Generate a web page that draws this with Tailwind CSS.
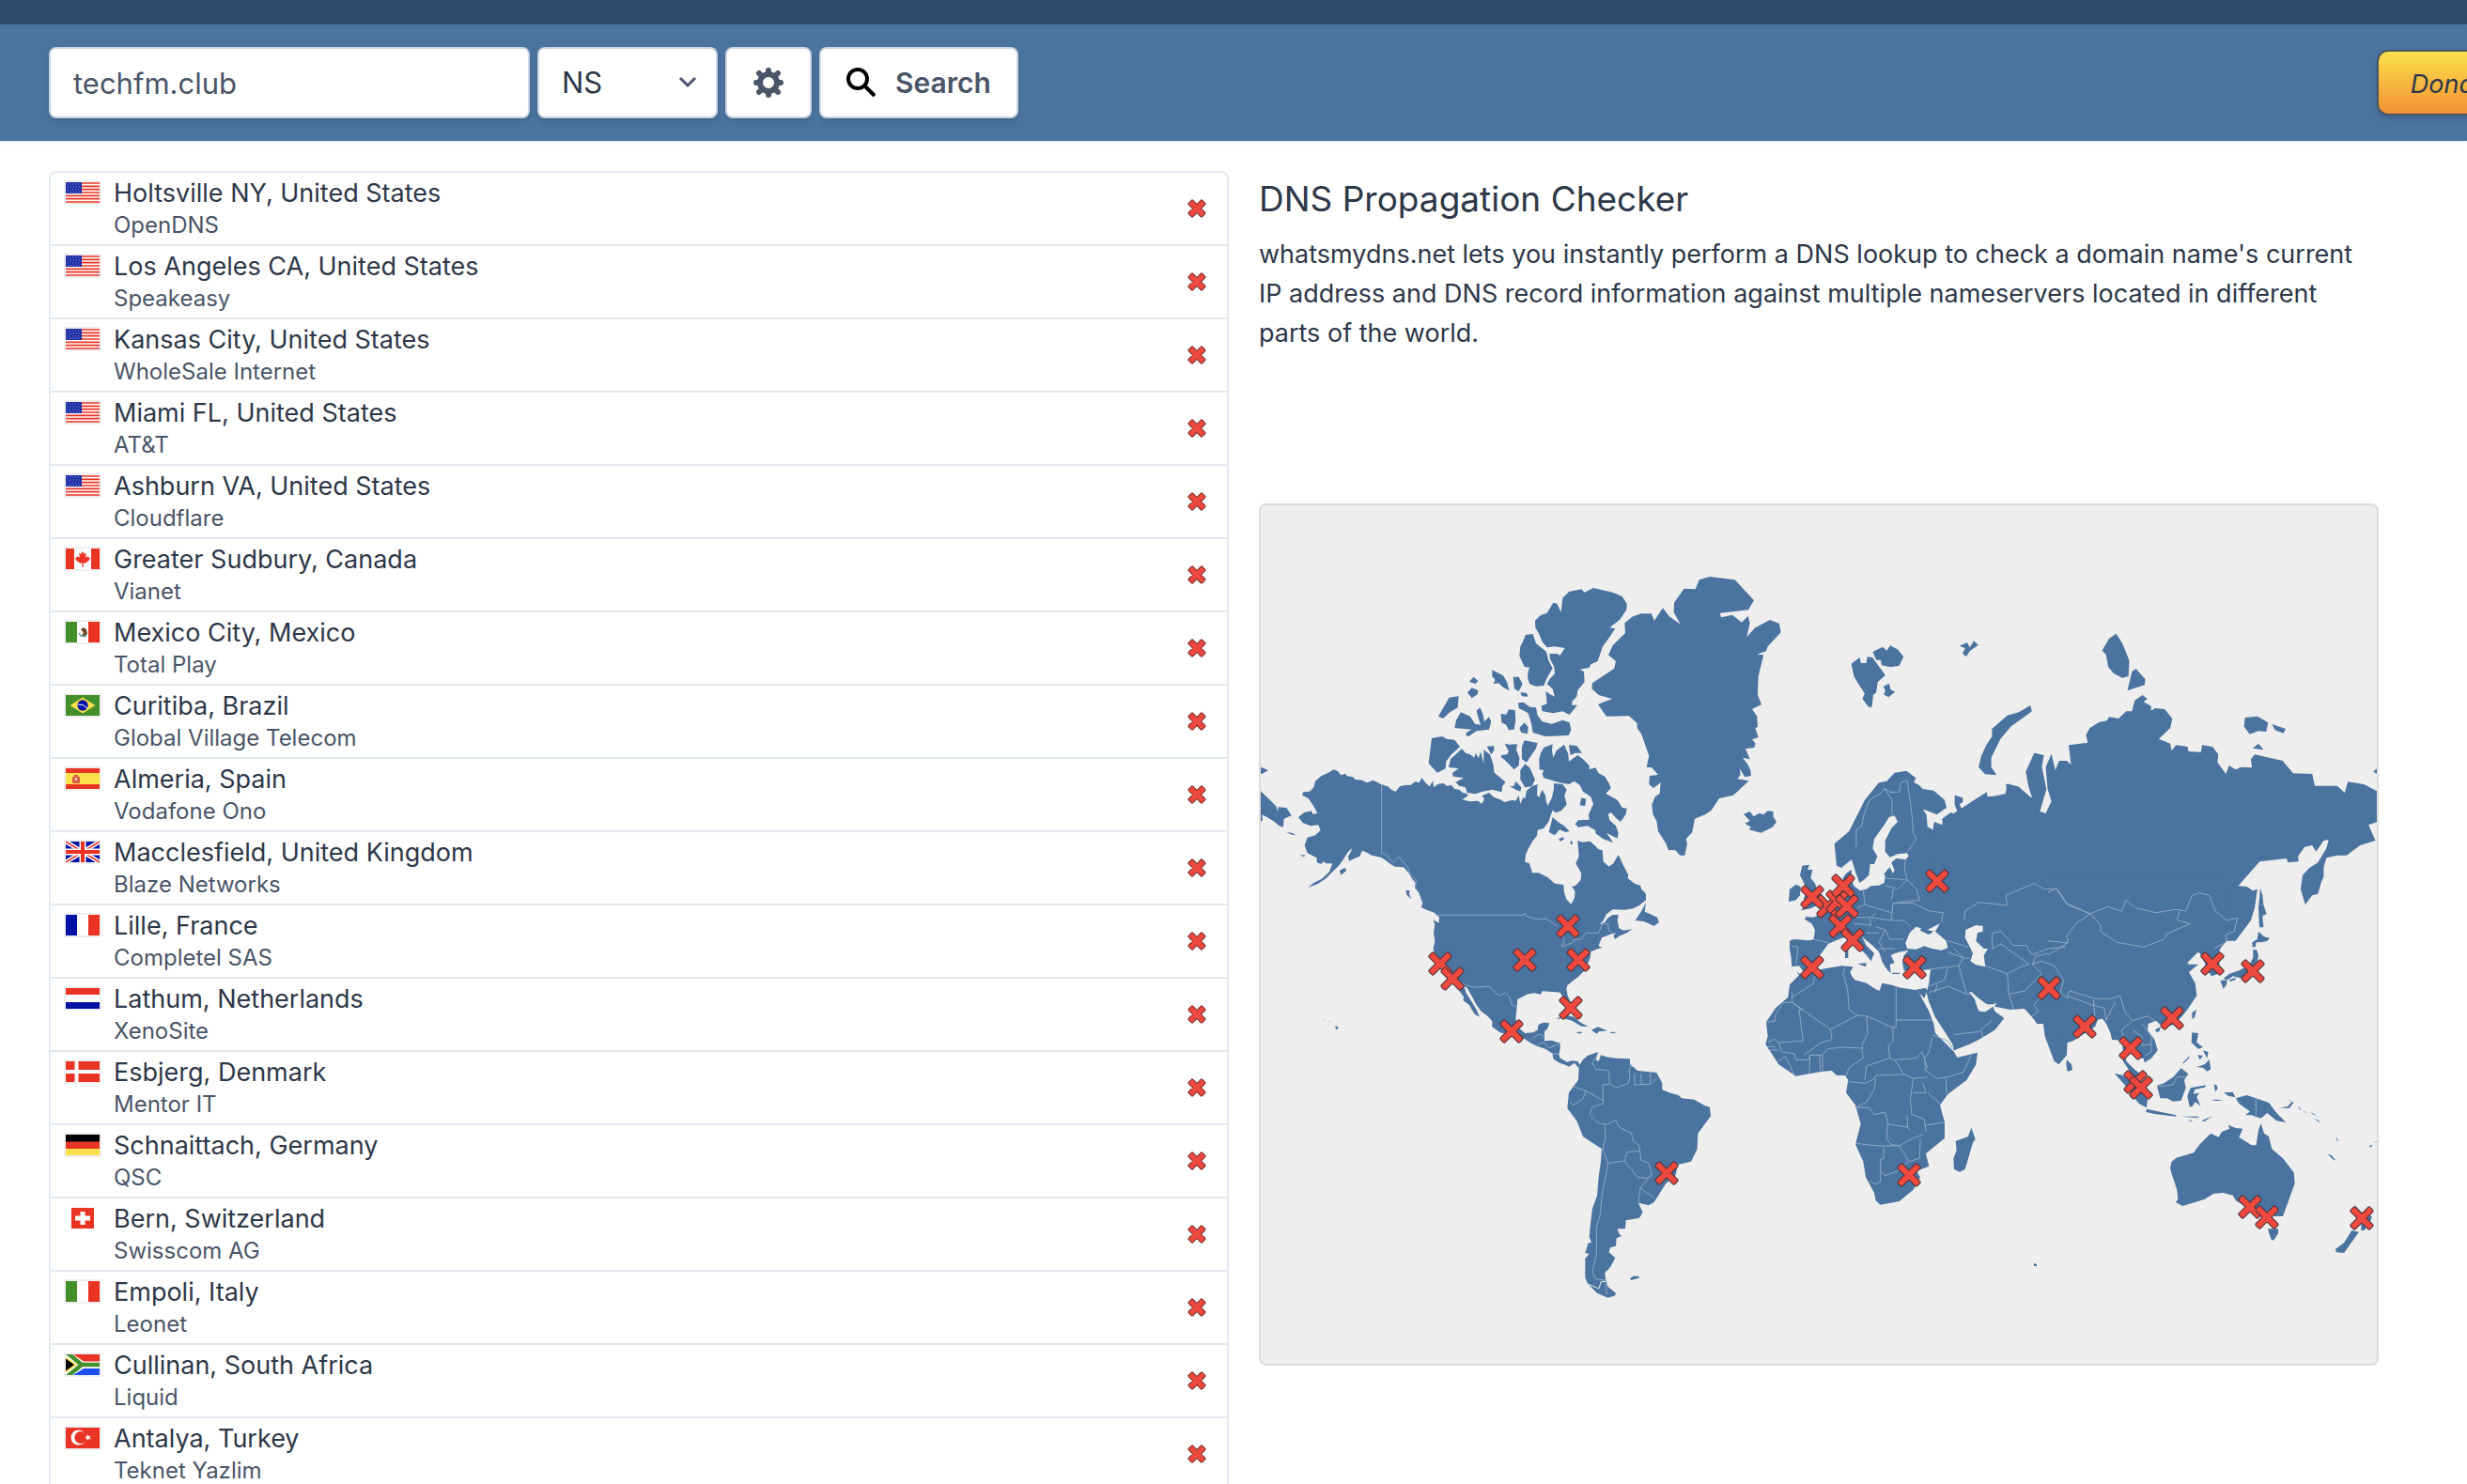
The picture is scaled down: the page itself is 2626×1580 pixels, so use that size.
<!DOCTYPE html>
<html lang="en">
<head>
    <meta charset="UTF-8">
    <meta name="viewport" content="width=device-width, initial-scale=1.0">
    <title>DNS Propagation Checker</title>
    <script src="https://cdn.jsdelivr.net/npm/@tailwindcss/browser@4"></script>
</head>
<body class="overflow-x-hidden bg-white font-['Inter','Liberation_Sans',sans-serif] text-[#2d3748]">
    <!-- Header -->
    <div class="h-[26px] bg-[#2e4a6d]"></div>
    <header class="relative flex items-center overflow-hidden bg-[#4a739f] py-6 pl-[52px] shadow">
        <form class="flex flex-1 gap-2" onsubmit="return false">
            <input type="text" aria-label="Domain" value="techfm.club" class="h-[76px] w-[512px] rounded-lg border-2 border-[#cbd5e0] bg-white px-6 text-[31px] text-[#4a5568] shadow-md">
            <div class="relative">
                <select aria-label="Record type" class="h-[76px] w-[192px] appearance-none rounded-lg border-2 border-[#cbd5e0] bg-white px-6 text-[31px] text-[#2d3748] shadow-md">
                    <option>NS</option>
                    <option>A</option>
                    <option>MX</option>
                </select>
                <svg class="pointer-events-none absolute top-6 right-5 size-6" viewBox="0 0 24 24" fill="none" stroke="#4a5568" stroke-width="3"><path d="M4 9l8 8 8-8"/></svg>
            </div>
            <button type="button" aria-label="Options" class="flex h-[76px] w-[92px] items-center justify-center rounded-lg border-2 border-[#cbd5e0] bg-white text-[#4a5568] shadow-md">
                <svg class="size-8" viewBox="-16 -16 32 32" fill="none" stroke="currentColor"><circle r="9" stroke-width="6"/><path stroke-width="6" stroke-linecap="round" d="M0-10.500V-13M0 10.500V13M-10.500 0H-13M10.500 0H13M-8.500-8.500L-10-10M8.500-8.500L10-10M-8.500 8.500L-10 10M8.500 8.500L10 10"/></svg>
            </button>
            <button type="submit" class="flex h-[76px] w-[212px] items-center justify-center gap-5 rounded-lg border-2 border-[#cbd5e0] bg-white text-[30px] font-semibold text-[#4a5568] shadow-md">
                <svg class="size-8" viewBox="0 0 32 32" fill="none" stroke="#000" stroke-width="4"><circle cx="12" cy="12" r="10"/><path d="M19 19l11 11"/></svg>
                Search
            </button>
        </form>
        <button type="button" class="-mr-16 h-[70px] w-40 shrink-0 rounded-xl border-2 border-[#4a5568] bg-gradient-to-b from-[#fae14b] to-[#f09035] pt-1 pl-1 text-[27px] text-[#2d3748] italic shadow-md">Donate</button>
    </header>

    <!-- Main Content -->
    <main class="grid grid-cols-2 items-start pt-8 pr-[62px] pl-[52px]">
        <ul id="servers" class="divide-y-2 divide-[#e2e8f0] rounded-lg border-2 border-[#e2e8f0]"></ul>

        <section class="px-8 pt-1">
            <h1 class="text-[37px] leading-[52px]">DNS Propagation Checker</h1>
            <p class="mt-3 text-[27px] leading-[42px]">whatsmydns.net lets you instantly perform a DNS lookup to check a domain name's current IP address and DNS record information against multiple nameservers located in different parts of the world.</p>

            <div class="mt-[160px] overflow-hidden rounded-lg border-2 border-[#dcdcdc] bg-[#eeeeee]">
                <svg class="block w-full" viewBox="0 0 1188 914">
                    <!-- Land -->
                    <g fill="#4a739f">
                        <g transform="translate(-2 242) scale(.33333)">
                            <path d="M238 118L252 123 262 136 277 131 280 138 300 142 308 150 330 152 345 160 365 152 392 166 412 172 425 184 437 188 450 172 470 167 484 168 500 156 512 160 520 144 532 160 545 172 556 154 558 175 572 164 590 162 600 170 615 168 625 180 640 182 650 192 665 195 668 202 650 214 672 220 700 218 712 228 720 212 712 202 735 192 750 206 770 214 785 222 810 215 820 218 830 200 835 228 845 205 850 212 855 185 865 178 875 170 890 165 888 200 895 206 905 182 915 200 918 222 923 235 930 222 938 248 925 285 910 305 890 312 888 330 875 345 860 372 852 390 850 413 864 418 873 448 893 448 922 462 945 482 973 486 975 510 982 532 997 548 1008 528 1010 508 1000 492 1012 488 1028 470 1030 450 1012 418 1022 395 1018 345 1035 350 1057 347 1075 362 1083 372 1097 376 1100 412 1118 428 1132 418 1148 390 1162 420 1180 455 1178 465 1200 482 1218 488 1222 500 1236 515 1236 535 1215 552 1195 562 1168 566 1130 565 1110 580 1100 600 1087 614 1105 605 1115 592 1130 582 1148 582 1145 600 1150 625 1165 632 1192 628 1175 640 1150 650 1138 660 1132 650 1140 640 1120 645 1095 655 1088 672 1085 682 1096 686 1078 692 1060 700 1058 720 1040 760 1020 780 1000 795 985 808 982 820 986 840 996 862 998 880 985 870 975 850 962 830 940 828 905 826 900 836 880 832 860 835 826 852 824 875 820 915 832 945 850 960 875 958 890 950 893 932 910 926 928 928 922 945 912 955 912 985 935 983 962 992 962 1010 958 1028 962 1040 985 1052 1000 1048 1018 1050 1025 1060 1020 1070 1008 1055 990 1067 975 1060 960 1055 940 1042 938 1025 915 1010 890 1002 870 992 848 978 810 968 770 958 745 940 745 922 730 905 710 890 695 870 682 845 665 815 655 810 662 832 680 860 695 885 705 908 690 900 680 885 672 870 652 855 655 845 640 825 620 800 590 770 570 730 560 705 557 690 562 665 558 640 562 615 557 598 575 608 576 590 560 575 540 568 518 558 523 545 518 530 510 510 498 495 500 480 490 468 478 448 462 430 435 428 420 420 405 408 390 398 360 392 345 383 330 377 322 395 305 402 288 410 285 395 295 378 297 370 285 380 270 405 255 425 235 445 215 465 190 482 157 495 175 480 200 468 225 445 235 418 215 418 205 412 200 420 185 415 185 400 155 385 146 360 155 335 180 328 197 312 190 295 165 298 140 288 126 270 145 255 168 250 172 260 187 258 175 235 158 210 138 200 142 190 162 188 175 175 180 155 200 138 222 128Z"/>
                            <path d="M6 187L55 235 60 252 62 238 88 240 104 265 80 275 78 302 65 298 50 285 30 272 10 262 12 280 6 285ZM6 110L30 120 10 132 6 130ZM88 318L105 320 118 328 105 326ZM132 390L150 392 142 397ZM258 440L275 432 280 440 262 455ZM470 503L482 505 480 515 487 532 472 518ZM243 938L251 938 254 944 247 949ZM225 922l5 2-4 1zM207 915l4 2-3 1z"/>
                            <path d="M1236 543L1222 570 1202 600 1230 603 1262 618 1278 605 1272 590 1250 580 1232 572ZM950 915L975 900 1005 908 1030 928 1052 938 1030 938 1000 920 970 912ZM1062 950L1082 940 1112 952 1085 955 1080 962ZM1015 956h16v5h-14zM1123 956h15v4h-15z"/>
                        </g>
                        <g transform="translate(158 62) scale(.33333)">
                            <path d="M72 558L105 552 120 560 145 563 162 585 135 610 118 632 116 655 90 668 62 638ZM168 592L180 605 195 610 208 620 212 605 222 622 228 600 238 640 238 595 258 610 268 640 272 668 308 698 298 710 295 730 265 722 235 728 210 736 185 732 180 715 160 710 148 698 175 685 140 680 138 668 158 655 126 650 132 625ZM248 585L270 582 272 595 262 610ZM305 575L320 578 345 577 342 595 352 620 350 645 335 658 318 640 294 618 294 612 312 610 318 600ZM368 565L410 573 405 590 375 635 360 625 360 585ZM370 640L385 652 402 690 392 712 370 715 355 690 355 660ZM322 712L335 710 340 695 358 715 355 728 340 722Z"/>
                            <path d="M420 605L430 588 458 577 456 598 460 620 470 598 495 578 508 608 510 632 538 612 555 625 575 645 575 658 595 652 605 670 625 680 640 705 644 718 628 735 665 755 680 780 695 782 692 800 675 825 660 812 645 795 635 800 640 820 660 838 668 860 665 878 630 860 652 892 620 880 595 862 595 852 570 838 540 842 530 832 540 820 575 818 573 802 588 768 580 745 555 728 545 708 528 695 510 705 480 700 430 685 425 672 430 660 416 658 415 625ZM510 580L535 582 552 605 530 605 515 612ZM462 702L490 705 503 722 496 740 503 770 485 790 468 796 442 775 455 750 462 720ZM458 810L475 825 495 838 512 855 500 858 480 850 465 868 446 858ZM478 880l12-6 6 6-14 8zM514 888l6-2 2 10-6 2zM550 748L565 752 562 775 545 772Z"/>
                            <path d="M348 445L365 443 385 458 405 460 410 485 425 505 455 512 490 500 512 508 517 530 510 548 490 550 435 552 395 540 390 510 380 478 350 462ZM490 110L510 90 550 82 560 92 588 78 650 92 680 105 695 128 694 148 672 180 640 205 658 208 635 242 618 265 602 312 580 322 575 332 545 338 558 345 560 378 538 405 535 425 520 440 520 452 537 452 512 483 490 472 460 478 425 472 422 455 440 448 436 408 450 418 465 425 458 400 440 385 448 370 465 352 463 330 450 305 448 288 470 288 482 293 497 270 465 265 440 268 425 250 415 225 403 205 402 182 420 165 440 158 460 125 472 128 485 155ZM372 228L395 225 405 255 438 282 445 310 458 335 440 365 430 390 405 392 385 385 378 365 380 345 385 332 368 330 352 295 355 265 365 245Z"/>
                            <path d="M265 340L300 358 312 378 320 406 300 395 285 382 268 385 275 372 265 360ZM332 362L350 362 362 385 350 408 336 400ZM355 412L375 413 380 425 360 424ZM192 378L205 362 220 374 212 384ZM186 412L200 397 220 405 218 418 200 430ZM93 488L128 428 158 424 155 460 130 475 108 495ZM165 475L195 488 210 512 228 515 220 490 215 470 226 460 235 480 240 505 255 490 262 505 255 530 215 535 190 552 182 550 182 540 200 530 145 525 150 500ZM293 480L310 482 318 466 338 468 340 500 335 530 318 532 310 515 295 508ZM352 525L368 508 380 522 378 544 358 540Z"/>
                            <path d="M585 382L655 335 660 312 636 292 650 262 690 222 688 190 712 170 740 160 773 160 783 182 810 142 830 168 866 194 845 155 846 125 878 80 914 82 926 52 960 42 1040 52 1101 118 1083 148 992 158 996 172 1032 164 1062 188 1082 168 1088 190 1078 235 1105 205 1152 180 1182 192 1187 220 1145 265 1140 280 1110 290 1132 292 1115 360 1113 420 1125 450 1095 465 1111 488 1113 522 1105 525 1115 555 1095 562 1106 575 1102 588 1074 592 1088 625 1065 620 1080 640 1090 660 1092 678 1072 682 1055 655 1058 675 1048 688 1085 694 1035 740 990 750 965 788 945 802 912 815 904 858 884 880 888 895 880 932 865 932 850 916 828 915 820 895 795 855 790 822 778 800 775 770 785 745 800 735 803 700 780 717 766 705 768 678 795 675 775 652 758 650 766 615 742 545 728 525 728 510 702 487 630 488 603 450 648 432 605 420 583 400Z"/>
                            <path d="M1068 800L1088 792 1100 808 1118 797 1132 802 1145 790 1163 792 1162 808 1173 825 1160 842 1123 860 1085 850 1092 842 1072 830 1088 822Z"/>
                        </g>
                        <g transform="translate(298 522) scale(.33333)">
                            <path d="M183 180L176 205 185 210 192 190 210 196 240 200 285 202 285 220 310 240 370 246 388 280 388 300 410 310 440 318 450 328 490 332 525 352 540 356 543 385 502 440 500 490 480 530 438 540 430 575 400 600 362 660 345 670 312 662 326 692 315 710 272 718 270 745 245 745 250 760 258 768 242 775 240 800 222 805 218 820 238 838 222 868 205 885 208 912 215 930 240 950 238 958 215 965 180 950 150 920 142 900 142 840 155 825 142 822 152 790 162 790 155 770 160 720 165 680 180 640 185 580 192 530 195 490 135 450 115 400 85 360 90 310 120 270 122 225 135 205 150 192ZM284 905L295 896 315 896 312 903 290 908Z"/>
                        </g>
                        <g transform="translate(498 242) scale(.33333)">
                            <path d="M218 765L228 770 262 762 300 755 360 745 398 748 388 765 395 780 402 790 440 800 470 820 482 825 490 800 515 805 550 815 595 822 630 815 634 825 625 848 608 832 640 890 655 930 660 960 700 1000 720 1020 730 1038 795 1022 790 1060 760 1110 700 1155 675 1190 690 1245 690 1295 630 1345 640 1385 600 1400 612 1420 590 1460 545 1497 485 1508 470 1495 465 1470 438 1420 430 1370 405 1315 422 1250 405 1190 375 1150 382 1110 372 1095 345 1095 330 1080 300 1082 215 1097 160 1060 118 995 125 970 120 925 150 880 190 845 195 805 225 775Z"/>
                            <path d="M195 665L208 660 260 664 272 660 276 630 265 610 243 596 248 588 270 590 290 582 320 560 345 535 360 515 370 500 365 465 375 450 393 437 392 465 400 490 420 505 440 500 455 490 480 488 497 480 500 460 497 450 515 430 525 450 530 440 520 415 535 402 565 405 575 395 570 385 540 388 515 398 500 380 500 345 520 305 540 285 530 265 512 270 500 290 465 340 460 370 475 395 465 420 452 420 448 455 432 470 418 480 405 445 393 405 360 432 345 425 338 355 385 315 435 215 480 160 505 155 530 128 568 122 598 145 592 160 605 165 620 180 655 185 690 215 696 240 665 262 635 250 620 245 632 262 635 300 655 312 655 290 685 298 682 275 710 255 725 262 730 250 722 230 722 200 748 208 748 222 738 228 742 240 762 242 770 225 825 190 825 205 885 200 890 185 885 165 925 172 968 210 972 180 1000 300 1500 300 1500 700 1350 850 1260 985 1225 980 1215 940 1190 910 1180 915 1170 940 1100 985 1082 990 1080 1030 1055 1060 1040 1050 1010 970 1005 930 985 930 970 910 945 882 900 885 850 875 855 862 845 868 825 868 800 850 775 828 768 830 785 850 795 880 800 890 820 892 845 875 850 890 880 912 850 950 800 980 770 995 720 1015 715 995 690 955 660 910 640 860 632 830 640 800 645 755 615 760 590 765 560 760 555 735 560 712 575 695 550 700 530 705 518 712 530 735 515 740 518 768 505 755 492 735 480 700 460 680 435 660 425 650 440 680 465 705 455 730 440 710 420 690 395 660 365 655 340 665 318 675 300 700 285 720 290 730 270 755 238 762 225 745 202 748 200 720 195 690Z"/>
                            <path d="M235 425L258 422 252 438 268 438 262 465 275 480 285 505 300 520 290 550 260 562 230 568 250 548 240 530 250 505 238 475 228 455ZM195 500L215 485 230 492 228 520 215 535 192 540ZM412 738L440 736 438 748ZM372 692h10v28h-10zM374 672l8 8-4 8zM522 767h24v4h-24zM775 1262L788 1298 780 1310 755 1395 738 1403 720 1395 718 1360 728 1335 725 1305 765 1290ZM1080 1045L1095 1060 1098 1078 1082 1082 1078 1060Z"/>
                        </g>
                        <g transform="translate(558 102) scale(.40816 .33333)">
                            <path d="M385 735L390 705 410 715 412 695 440 678 475 650 525 612 530 628 575 615 580 583 600 590 645 630 635 590 628 545 650 485 675 492 670 530 682 600 665 672 680 678 695 640 685 600 680 530 695 488 705 540 715 510 735 510 746 522 740 460 790 452 785 428 795 405 820 386 840 382 845 370 870 375 890 352 905 352 912 318 932 300 945 312 935 322 955 335 955 350 965 342 990 345 1010 375 1005 405 975 440 1005 455 1008 478 1020 460 1050 465 1052 480 1085 482 1088 460 1115 465 1130 490 1128 515 1150 552 1158 525 1175 538 1190 530 1218 532 1215 505 1225 490 1298 510 1325 550 1375 552 1382 590 1440 590 1460 612 1468 577 1510 585 1545 608V705L1522 715 1540 765 1500 780 1465 812 1440 812 1412 820 1405 850 1405 880 1398 900 1390 935 1375 940 1357 970 1345 920 1350 875 1368 852 1390 835 1412 790 1418 762 1405 765 1385 800 1375 780 1355 785 1338 815 1340 832 1312 835 1308 822 1238 832 1182 910 1205 912 1220 925 1232 920 1225 980 1215 1020 1175 1085 1150 1085 1130 1100 1000 1150H560L400 1000Z"/>
                            <path d="M525 460L540 432 540 408 580 365 610 355 640 333 644 352 590 400 562 440 538 500 538 530 552 556 522 553 505 530 512 495ZM173 200L195 180 198 198 212 198 215 178 228 180 262 237 242 258 238 292 230 300 227 338 218 338 202 312 208 295 190 262 180 240ZM229 162L255 146 265 158 275 142 295 155 309 178 298 206 275 211 252 205 250 188 238 188ZM257 272L272 263 275 282 287 290 270 307 257 298 262 288ZM455 143L475 132 482 148 493 127 504 140 482 160 473 177 463 168 470 150ZM827 158L845 120 864 104 880 135 898 190 896 240 880 245 858 232 843 210 837 170ZM893 286L905 225 915 216 940 250 938 268ZM1197 400L1200 372 1232 368 1260 388 1255 417 1235 415 1212 425ZM1270 393L1306 408 1300 422 1278 412ZM1220 470L1235 455 1248 475ZM1534 545L1545 533V552Z"/>
                        </g>
                        <g transform="translate(838 362) scale(.33333)">
                            <path d="M0 100L560 100 570 305 550 330 545 345 548 390 540 412 522 418 510 400 500 375 485 345 475 340 455 352 435 365 450 380 480 380 450 405 470 440 475 480 445 525 425 550 395 575 375 580 355 570 345 560 320 570 318 590 340 620 350 655 330 680 308 694 305 680 295 680 280 660 262 650 245 665 250 690 275 715 300 735 295 750 270 735 240 690 240 660 235 610 205 622 200 600 178 552 150 560 60 625 0 600Z"/>
                            <path d="M678 138L685 160 688 190 698 220 685 225 688 262 675 262 672 200ZM672 275L690 292 708 296 700 306 680 310 665 310 662 325 653 325 652 310 668 300ZM655 332L668 335 672 355 665 385 650 410 620 425 590 418 575 430 560 425 580 410 610 400 640 385 655 360ZM550 432L572 430 570 445 560 458ZM580 430L600 422 598 430 582 436ZM460 535L474 525 468 550 460 555ZM343 588L360 580 355 595 345 596ZM460 598L480 600 475 630 495 645 480 650 458 630ZM478 670L495 672 485 685ZM495 655L512 660 508 680ZM475 708L500 700 515 685 520 715 508 722 495 710ZM430 695L452 672 450 680 433 697Z"/>
                            <path d="M348 768L370 760 400 740 425 712 448 730 435 750 440 775 425 815 400 818 380 808 358 808ZM212 728L240 735 280 770 318 810 315 838 290 825 245 765ZM315 842L350 850 410 862 408 866 340 858 313 852ZM425 866H485L475 871ZM445 876L462 880 458 883ZM490 880L525 865 500 882ZM455 775L505 766 500 773 468 780 465 795 482 790 475 805 487 832 470 820 460 835 452 835 445 800ZM530 765h8l4 12-8 10zM520 813L540 812 560 816 535 816ZM562 790L590 788 600 808 635 798 705 822 730 855 760 885 730 880 700 855 680 872 650 862 630 862 645 850 610 825 598 805 575 800ZM738 838L765 835 778 820 762 808 784 822 770 840ZM798 832L810 846 803 843ZM815 848L828 854 820 853ZM838 853L858 862 848 860ZM850 872L872 884 862 883ZM920 930L928 945 922 942ZM893 986L905 990 920 1007 910 1003ZM1025 960l12-3-6 8zM1038 950L1052 944V947Z"/>
                            <path d="M395 1010L410 998 465 982 485 955 500 940 520 920 545 932 555 915 580 905 575 893 600 903 622 905 610 932 650 958 665 958 672 910 680 888 690 920 705 930 715 970 750 1000 785 1045 788 1080 770 1130 750 1185 730 1185 690 1180 660 1170 625 1150 600 1135 590 1118 560 1110 530 1112 500 1130 470 1140 430 1152 408 1140 415 1130 412 1100 395 1050 390 1030ZM702 1225L735 1225 735 1240 720 1262 712 1258ZM978 1145L990 1160 1005 1175 1035 1185 1030 1200 1010 1230 1000 1230 1000 1210 990 1170ZM970 1230L993 1235 975 1260 945 1302 920 1300 918 1290 945 1270Z"/>
                        </g>
                        <path d="M823 807l3 1v2l-3 0z"/>
                    </g>

                    <!-- Inland seas and straits -->
                    <g fill="#eeeeee">
                        <g transform="translate(498 242) scale(.33333)">
                            <path d="M565 672L578 640 598 620 615 625 612 632 628 640 640 645 655 635 635 630 675 610 660 635 695 665 700 688 680 695 650 690 625 682 600 692 570 690Z"/>
                            <path d="M757 630L790 615 812 618 812 635 795 640 790 665 815 690 828 690 815 712 820 748 790 742 772 730 780 705 768 680 755 655Z"/>
                        </g>
                        <path d="M348 829L360 834 362 827 368 826" fill="none" stroke="#eeeeee"/>
                    </g>

                    <!-- Country borders -->
                    <g fill="none" stroke="#8fa8c6" stroke-width="3" stroke-linejoin="round">
                        <g transform="translate(-2 242) scale(.33333)">
                            <path d="M392 166V386L405 388 428 415 447 397 475 430 485 458 502 470 500 495M570 583H845L848 576 853 586 880 594 895 597 915 594 935 605 955 620M972 650L975 665 966 684 1005 670 1008 660 1028 660 1045 640 1085 640 1097 612 1115 610 1118 632 1130 640M650 800L665 808 690 814 735 810 752 828 768 840 788 832 800 845 808 870 822 875M875 978L890 965H905L910 978M890 998L910 988 925 1008 962 992M938 1025L960 1028"/>
                        </g>
                        <g transform="translate(298 522) scale(.33333)">
                            <path d="M180 190L165 215 175 235 218 240 220 280 240 295 280 280 285 255 282 240 290 220M300 250V285L350 283 370 265M320 250L322 283M350 246V283M220 283L198 285 200 345 165 355 157 380 180 405 210 412 240 398 248 418 290 440 295 465 315 480 320 525 345 535 355 570 345 583 310 580 268 530 275 500 315 497M103 290L145 305 198 335M145 305L135 330 105 350 95 340M205 410L207 455 198 490 215 535 265 528M215 535L205 590 195 640 190 700 178 740 178 830 165 880 175 905 210 910V955M355 570L318 615 312 662M318 615L360 645"/>
                        </g>
                        <g transform="translate(498 242) scale(.33333)">
                            <path d="M203 845L270 802 275 780M203 830V862L325 948 412 903 385 885 380 820 365 770 372 748M203 862H175L150 900 148 922 122 925M225 885L238 985 160 990 145 978 125 990M203 862L237 885H225M325 948L330 980 295 990 240 1030M412 903L440 905 525 942 535 940V812M535 918H650M440 905L445 960 425 1000 430 1010M315 1010L365 1005 425 1008 430 1040 385 1070 375 1095M525 942V985L510 1000 515 1040 440 1065 435 1110M515 1040L530 1045 600 1040 618 1020M650 975L640 1020 625 1040 630 1080 665 1105 700 1100 750 1085 775 1030M650 965L700 985 720 1015M160 990L170 1020 210 1025 215 1045 255 1045 260 1030 300 1030 315 1010M260 1030L258 1090M300 1030V1080M290 1030L293 1080M160 1050L180 1035 195 1060 210 1095M385 1115L440 1120 465 1105 470 1095 560 1092 590 1105 635 1100M470 1105L465 1140 440 1180 410 1195M405 1198H450L465 1220 500 1212 508 1250 505 1300 520 1315 545 1320M508 1250L570 1260 580 1270M405 1312L480 1320 545 1320 590 1295 620 1285M495 1325V1362H485V1435L465 1442 450 1430M485 1400L500 1415 540 1400 575 1370 610 1360 612 1300M545 1320L575 1370M590 1105L580 1170 585 1220 625 1235 630 1275M635 1150L675 1185M590 1150H630L620 1120M695 1105V1155M570 1225L572 1260M625 1255L690 1245M125 1003H150M125 1012L160 1015M530 1045L560 1092M618 1020L635 1070"/>
                            <path d="M408 365V310L425 300 430 270 450 215 485 195 497 178 522 215V265M497 178L515 190 545 190 550 160 570 152 575 185 580 220 585 260 590 320 600 340 570 382M565 405L562 440 570 470 600 500 610 535 525 545 520 600M500 465L565 470M500 488L540 500 570 470M525 500L520 535M430 500L435 550 520 575M435 550L410 560M405 590L450 590 520 600 560 600 580 620M450 590L455 615 400 610M470 620L500 630 515 660 560 660M500 630L480 670 500 700M455 590L470 575M440 640L480 640M480 690L530 690M525 545L590 545 640 570 685 575 680 605M202 682L222 685 215 740M272 660L320 672"/>
                            <path d="M752 600L755 570 800 542 890 552 885 520 975 482 1010 500 1050 500 1080 545 1155 580M842 690V640L870 635 910 680 950 680 970 710 1020 690 1075 685M842 690L870 675 960 740 940 745 890 770 820 745M970 740L980 715 1020 705M890 770L895 835 945 825 1000 770 970 740 1000 730 1040 745 1070 790 1060 830 1085 850M645 755L735 745 750 720 700 700M700 665L765 685M720 690L750 720 770 720M735 745L760 835 700 810 640 830M700 750L690 790 640 810M760 835H775M720 965L800 955 840 920M805 950L812 972M910 885L895 835M970 905L990 890 975 870 1000 840M665 805L660 830"/>
                        </g>
                        <g transform="translate(838 362) scale(.33333)">
                            <path d="M135 218L190 196 235 210 248 175 280 200 345 215 410 205 440 210 460 160 485 152 515 160 535 210 570 240 605 232 595 275 568 285 568 310 530 330M135 218L168 255V275L220 310 305 325 370 300 380 282 455 250 412 240 420 210M0 150L25 138 62 190 135 218 90 250 60 290 65 310 0 350M62 312L0 305M60 480L70 465 150 490 200 490 230 480 245 530 270 560M60 480L140 510 180 520 185 560 215 500M145 495L150 550M270 560L320 545 340 560M270 560L235 590 240 610M270 590L300 610 300 640 330 635M300 570L330 610 330 660 310 672M355 770L400 765 410 740 440 740M664 805V870"/>
                        </g>
                    </g>

                    <!-- One pin for each server -->
                    <g id="pins"></g>
                </svg>
            </div>
        </section>
    </main>

    <script>
        const flags = {
            us: '<path fill="#fff" d="M0 0h36v22H0z"/><path stroke="#e93323" stroke-width="1.7" d="M0 1h36M0 4.3h36M0 7.7h36M0 11h36M0 14.3h36M0 17.7h36M0 21h36"/><path fill="#2231a8" d="M0 0h17v12H0z"/><path stroke="#7d88cf" stroke-dasharray="1 2" d="M1 2h15M2 5h14M1 8h15M2 10.500h14"/>',
            ca: '<path fill="#fff" d="M0 0h36v22H0z"/><path fill="#e93323" d="M0 0h9v22H0zM27 0h9v22h-9zM18 3l2 3 2-1-1 5 2-2 1 1.500 2 0-1 3-4 3h-2.500l.3 4h-1.600l.3-4H15l-4-3-1-3h2l1-1.500 2 2-1-5 2 1z"/>',
            mx: '<path fill="#fff" d="M0 0h36v22H0z"/><path fill="#43902b" d="M0 0h12v22H0z"/><path fill="#e93323" d="M24 0h12v22H24z"/><path fill="#6b4b2a" d="M16 8l3-2 3 2 1 5-3 3-3-2 2-2z"/><path fill="none" stroke="#5f9ea0" stroke-width="1.500" d="M14 12q2 5 8 3"/>',
            br: '<path fill="#43902b" d="M0 0h36v22H0z"/><path fill="#fae04b" d="M18 2.500L31.500 11 18 19.500 4.500 11z"/><circle cx="18" cy="11" r="5.700" fill="#0312a5"/><path fill="none" stroke="#fff" d="M12.500 10q6-1 10.500 4"/>',
            es: '<path fill="#e93323" d="M0 0h36v22H0z"/><path fill="#fae04b" d="M0 5h36v12H0z"/><path fill="#d9604a" d="M9 7h4v2h2v7H7V9h2z"/><path fill="#f3d5c0" d="M10 10h2v3h-2z"/>',
            gb: '<path fill="#0312a5" d="M0 0h36v22H0z"/><path stroke="#fff" stroke-width="4.500" d="M0 0l36 22M36 0L0 22"/><path stroke="#e93323" stroke-width="1.500" d="M0 0l36 22M36 0L0 22"/><path stroke="#fff" stroke-width="7" d="M18 0v22M0 11h36"/><path stroke="#e93323" stroke-width="4" d="M18 0v22M0 11h36"/>',
            fr: '<path fill="#fff" d="M0 0h36v22H0z"/><path fill="#0312a5" d="M0 0h12v22H0z"/><path fill="#e93323" d="M24 0h12v22H24z"/>',
            nl: '<path fill="#fff" d="M0 0h36v22H0z"/><path fill="#e93323" d="M0 0h36v7H0z"/><path fill="#0312a5" d="M0 15h36v7H0z"/>',
            dk: '<path fill="#e93323" d="M0 0h36v22H0z"/><path stroke="#fff" stroke-width="4" d="M11.500 0v22M0 11h36"/>',
            de: '<path d="M0 0h36v8H0z"/><path fill="#e93323" d="M0 7.500h36v8H0z"/><path fill="#fae04b" d="M0 15h36v7H0z"/>',
            ch: '<path fill="#e93323" d="M6 0h24v22H6z"/><path stroke="#fff" stroke-width="5" d="M18 4v14M10 11h16"/>',
            it: '<path fill="#fff" d="M0 0h36v22H0z"/><path fill="#43902b" d="M0 0h12v22H0z"/><path fill="#e93323" d="M24 0h12v22H24z"/>',
            za: '<path fill="#fff" d="M0 0h36v22H0z"/><path fill="#e93323" d="M8 0h28v7.500H19z"/><path fill="#1c50f0" d="M8 22h28v-7H19z"/><path fill="none" stroke="#43902b" stroke-width="4.500" d="M1-2l16 13L1 24M16 11h20"/><path fill="#fae04b" d="M0 2.500L12 11 0 19.500z"/><path d="M0 4.500L9 11l-9 6.500z"/>',
            tr: '<path fill="#e93323" d="M0 0h36v22H0z"/><circle cx="13.500" cy="10.500" r="8" fill="#fff"/><circle cx="15.800" cy="10.500" r="6.400" fill="#e93323"/><path fill="#fff" d="M20 10.500l2.400-.9.200-2.400 1.600 1.900 2.400-.6-1.300 2 1.300 2.100-2.400-.6-1.600 1.800-.2-2.400z"/>'
        };

        const servers = [
            ['us', 'Holtsville NY, United States', 'OpenDNS'],
            ['us', 'Los Angeles CA, United States', 'Speakeasy'],
            ['us', 'Kansas City, United States', 'WholeSale Internet'],
            ['us', 'Miami FL, United States', 'AT&amp;T'],
            ['us', 'Ashburn VA, United States', 'Cloudflare'],
            ['ca', 'Greater Sudbury, Canada', 'Vianet'],
            ['mx', 'Mexico City, Mexico', 'Total Play'],
            ['br', 'Curitiba, Brazil', 'Global Village Telecom'],
            ['es', 'Almeria, Spain', 'Vodafone Ono'],
            ['gb', 'Macclesfield, United Kingdom', 'Blaze Networks'],
            ['fr', 'Lille, France', 'Completel SAS'],
            ['nl', 'Lathum, Netherlands', 'XenoSite'],
            ['dk', 'Esbjerg, Denmark', 'Mentor IT'],
            ['de', 'Schnaittach, Germany', 'QSC'],
            ['ch', 'Bern, Switzerland', 'Swisscom AG'],
            ['it', 'Empoli, Italy', 'Leonet'],
            ['za', 'Cullinan, South Africa', 'Liquid'],
            ['tr', 'Antalya, Turkey', 'Teknet Yazlim']
        ];

        document.getElementById('servers').innerHTML = servers.map(([flag, place, provider]) => `
            <li class="flex items-start gap-[13px] py-1 pr-[22px] pl-[14px]">
                <svg class="mt-1 h-[26px] w-10 shrink-0 ${flag === 'ch' ? 'bg-white' : 'bg-[#eeeeee]'}" viewBox="-2 -2 40 26"><svg width="36" height="22" viewBox="0 0 36 22">${flags[flag]}</svg></svg>
                <div class="flex-1">
                    <div class="text-[27px] leading-9">${place}</div>
                    <div class="text-[24px] leading-8 text-[#4a5568]">${provider}</div>
                </div>
                <svg class="size-5 shrink-0 self-center" viewBox="-10 -10 20 20"><g transform="rotate(45)" stroke-linejoin="round"><path fill="#7a3330" stroke="#7a3330" stroke-width="3.500" d="M-9-2H-2V-9H2V-2H9V2H2V9H-2V2H-9Z"/><path fill="#ee493f" stroke="#ee493f" stroke-width="1.500" d="M-9-2H-2V-9H2V-2H9V2H2V9H-2V2H-9Z"/></g></svg>
            </li>`).join('');

        // Pin positions in map units
        const pins = [
            [327, 448], [281, 484], [338, 484], [191, 488], [204, 504], [330, 535], [267, 560], [432, 711],
            [690, 713], [604, 427], [587, 417], [614, 422], [620, 405], [624, 427], [617, 448], [630, 463],
            [720, 400], [587, 492], [696, 492], [839, 514], [877, 555], [1013, 488], [1056, 496], [970, 546],
            [926, 578], [931, 614], [937, 620], [1053, 747], [1071, 758], [1172, 759]
        ];
        document.getElementById('pins').innerHTML = pins.map(([x, y]) => `
            <g transform="translate(${x} ${y}) rotate(45)" stroke-linejoin="round"><path fill="#4d3038" stroke="#4d3038" stroke-width="4" d="M-13-2H-2V-13H2V-2H13V2H2V13H-2V2H-13Z"/><path fill="#ee493f" stroke="#ee493f" stroke-width="2" d="M-13-2H-2V-13H2V-2H13V2H2V13H-2V2H-13Z"/></g>`).join('');
    </script>
</body>
</html>
